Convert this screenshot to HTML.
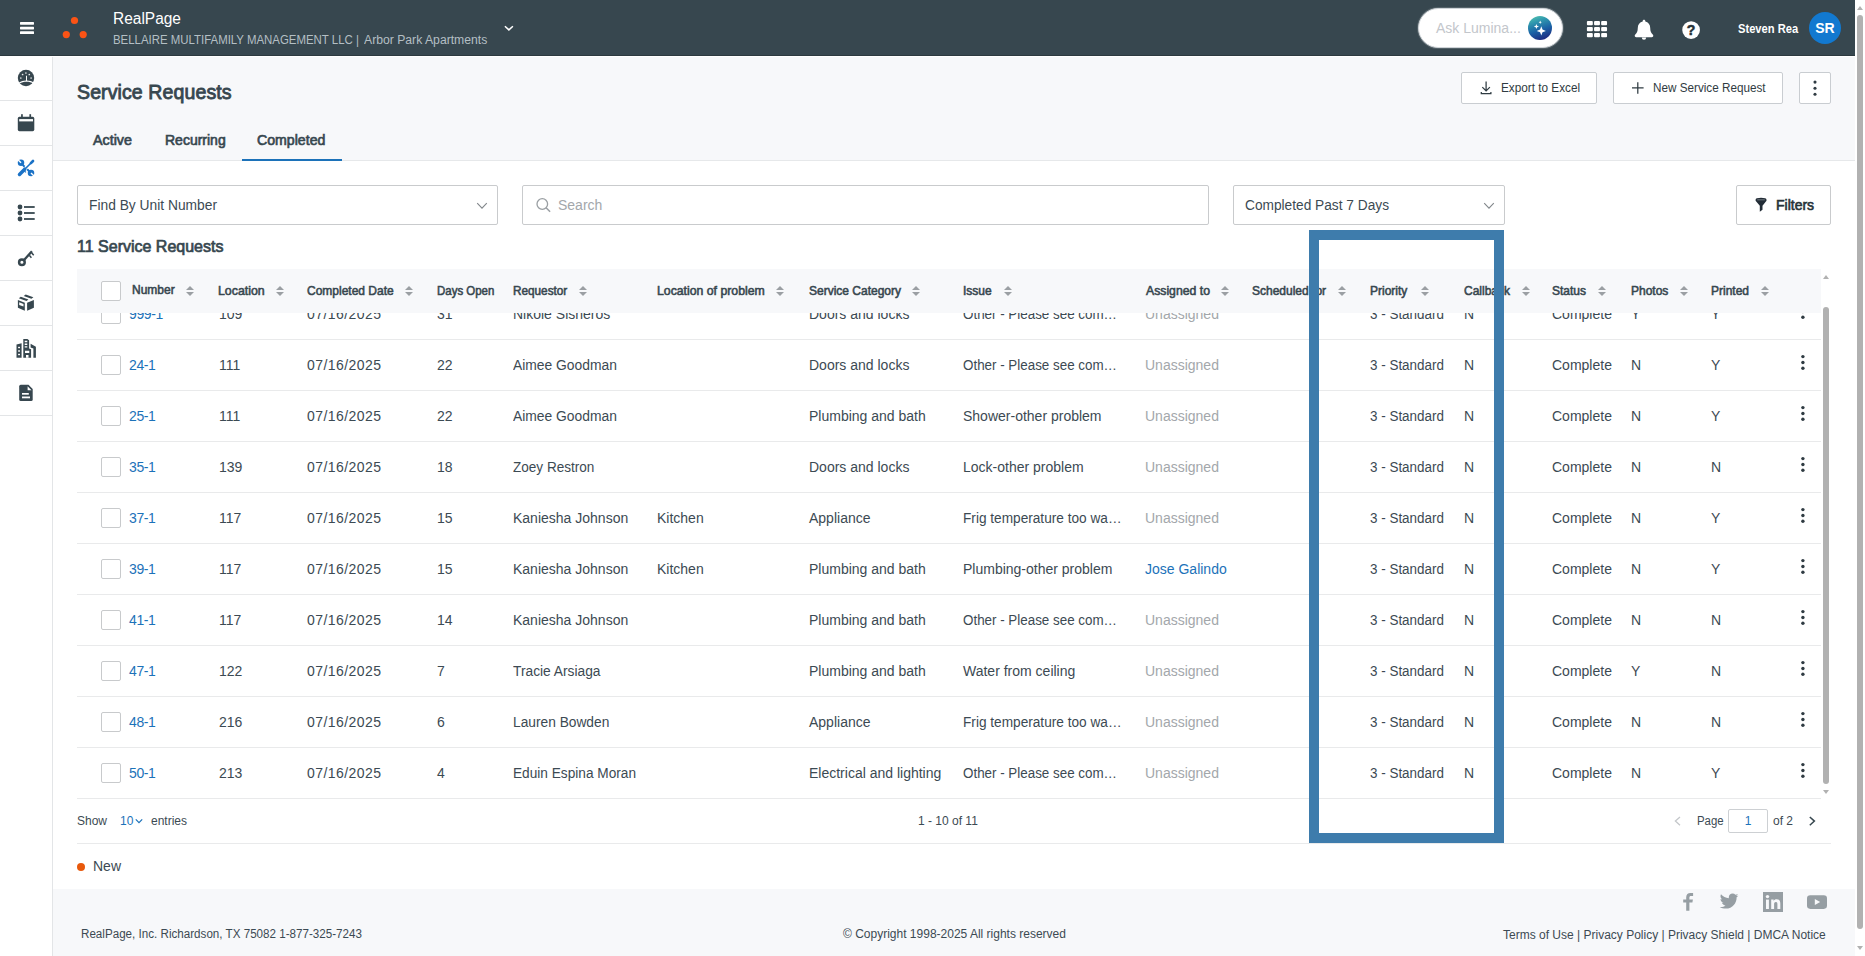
<!DOCTYPE html>
<html lang="en">
<head>
<meta charset="utf-8">
<title>Service Requests</title>
<style>
*{box-sizing:border-box;margin:0;padding:0}
html,body{width:1865px;height:956px;overflow:hidden;background:#fff}
body{font-family:"Liberation Sans",sans-serif;font-size:14px;color:#3c4a53;position:relative}
.abs{position:absolute}
.sx{transform-origin:0 50%;display:inline-block}
/* ---------- top bar ---------- */
#topbar{position:absolute;left:0;top:0;width:1855px;height:56px;background:#37474f;color:#fff;border-bottom:1px solid #2c393f}
#topbar .burger{position:absolute;left:20px;top:22px;width:14px;height:12px}
#topbar .burger i{position:absolute;left:0;width:14px;height:2px;background:#fff}
#topbar .brand{position:absolute;transform:scaleX(.967);transform-origin:0 50%;left:113px;top:9px;font-size:16px;line-height:20px;color:#fff;white-space:nowrap}
#topbar .sub{position:absolute;transform:scaleX(.969);transform-origin:0 50%;left:113px;top:32px;font-size:12px;line-height:16px;color:#b4bfc4;white-space:nowrap}
#topbar .uname{position:absolute;transform:scaleX(.93);transform-origin:0 50%;left:1738px;top:21px;font-size:12px;line-height:16px;font-weight:bold;white-space:nowrap}
#topbar .avatar{position:absolute;left:1809px;top:12px;width:32px;height:32px;border-radius:50%;background:#1279d0;color:#fff;font-size:14px;font-weight:bold;line-height:32px;text-align:center}
#ask{position:absolute;left:1418px;top:8px;width:145px;height:40px;border-radius:20px;background:#fff;border:1px solid #cfd4d8;box-shadow:0 0 0 1px rgba(255,255,255,.15)}
#ask span{position:absolute;left:17px;top:11px;font-size:14px;line-height:16px;color:#c3c6cb;white-space:nowrap}
/* ---------- side nav ---------- */
#side{position:absolute;left:0;top:56px;width:53px;height:900px;background:#fff;border-right:1px solid #e3e5e7}
#side .it{position:absolute;left:0;width:52px;height:45px;border-bottom:1px solid #e3e5e7}
#side .it svg{position:absolute;left:14px;top:10px;width:24px;height:24px}
/* ---------- page ---------- */
#page{position:absolute;left:53px;top:56px;width:1802px;height:900px;background:#f7f8fa}
#panel{position:absolute;left:53px;top:160px;width:1802px;height:729px;background:#fff;border-top:1px solid #e6e8ea}
h1{position:absolute;left:77px;top:80px;transform:scaleX(.977);transform-origin:0 50%;font-size:20px;line-height:24px;font-weight:normal;-webkit-text-stroke:.85px currentColor;letter-spacing:.1px;color:#37474f;white-space:nowrap}
.tab{position:absolute;transform-origin:0 50%;top:131px;font-size:14px;line-height:18px;font-weight:normal;-webkit-text-stroke:.65px currentColor;color:#37474f;white-space:nowrap}
.btn{position:absolute;height:32px;top:72px;border:1px solid #c9cdd1;border-radius:2px;background:#fff;font-size:12px;line-height:30px;color:#2f3b42;white-space:nowrap}
.field{position:absolute;top:185px;height:40px;border:1px solid #c9cbcd;border-radius:2px;background:#fff;font-size:14px;line-height:38px;color:#3c4a53;white-space:nowrap}
/* ---------- grid ---------- */
#ghead{position:absolute;left:77px;top:269px;width:1744px;height:44px;background:#f7f8fa;z-index:3}
#ghead span{position:absolute;top:14px;transform-origin:0 50%;font-size:12px;line-height:16px;font-weight:normal;-webkit-text-stroke:.55px currentColor;color:#37474f;white-space:nowrap}
#ghead em{position:absolute;top:17px;width:8px;height:10px}
#ghead em:before,#ghead em:after{content:"";position:absolute;left:0;border-left:4px solid transparent;border-right:4px solid transparent}
#ghead em:before{top:0;border-bottom:4px solid #9b9fa3}
#ghead em:after{top:6px;border-top:4px solid #9b9fa3}
.cb{position:absolute;left:24px;width:20px;height:20px;border:1px solid #c8cacc;border-radius:2px;background:#fff}
#rows{position:absolute;left:77px;top:289px;width:1744px;height:510px;overflow:hidden;z-index:1}
.r{position:relative;height:51px;border-bottom:1px solid #e9eaeb}
.r span,.r a{position:absolute;top:17px;font-size:14px;line-height:16px;white-space:nowrap;color:#3c4a53;text-decoration:none}
.r a,.r .lk{color:#1c72b9}
.r .mut{color:#a3a7ab}
.r .cb{top:15px}
.r .kb{position:absolute;left:1722px;top:13.5px;fill:#2f3b42}
.c1{left:52px;letter-spacing:-.4px}.c2{left:142px}.c3{left:230px;letter-spacing:.45px}.c4{left:360px}.c5{left:436px}.c6{left:580px}.c7{left:732px}.c8{left:886px;transform-origin:0 50%}.c9{left:1068px}.c11{left:1293px;transform:scaleX(.96);transform-origin:0 50%}.c12{left:1387px}.c13{left:1475px}.c14{left:1554px}.c15{left:1634px}
.gf{position:absolute;top:813px;font-size:12px;line-height:16px;color:#3c4a53;white-space:nowrap}
.tri-up{width:0;height:0;border-left:3px solid transparent;border-right:3px solid transparent;border-bottom:4px solid #b1b1b1}
.tri-dn{width:0;height:0;border-left:3px solid transparent;border-right:3px solid transparent;border-top:4px solid #b1b1b1}
#hl{position:absolute;left:1309px;top:230px;width:195px;height:613px;border:10px solid #3e7cac;z-index:9}
#foot{position:absolute;left:53px;top:889px;width:1802px;height:67px;background:#f7f8fa;font-size:12px;color:#3c4a53}
#sb{position:absolute;left:1855px;top:0;width:10px;height:956px;background:#fff}
</style>
</head>
<body>
<div id="page"></div>
<div id="panel"></div>

<!-- TOP BAR -->
<div id="topbar">
  <svg class="abs" style="left:18px;top:20px" width="18" height="16" viewBox="18 20 18 16"><g fill="#fff"><rect x="20" y="22" width="14" height="2.700" rx=".6"/><rect x="20" y="26.700" width="14" height="2.700" rx=".6"/><rect x="20" y="31.300" width="14" height="2.700" rx=".6"/></g></svg>
  <svg class="abs" style="left:60px;top:14px" width="30" height="28" viewBox="0 0 30 28"><circle cx="14.5" cy="6.5" r="3.6" fill="#fb5315"/><circle cx="6.3" cy="20.6" r="3.6" fill="#fb5315"/><circle cx="23.2" cy="20.6" r="3.6" fill="#fb5315"/></svg>
  <div class="brand">RealPage</div>
  <div class="sub" style="transform:scaleX(.952)">BELLAIRE MULTIFAMILY MANAGEMENT LLC |</div>
  <div class="sub" style="left:364px;transform:scaleX(1.016)">Arbor Park Apartments</div>
  <div id="ask"><span>Ask Lumina...</span></div>
  <svg class="abs" style="left:1500px;top:0" width="340" height="56" viewBox="1500 0 340 56">
    <defs><linearGradient id="lg" x1="0.25" y1="0" x2="0.6" y2="1"><stop offset="0" stop-color="#4fbfb0"/><stop offset="0.25" stop-color="#2f97ae"/><stop offset="0.6" stop-color="#1b62a6"/><stop offset="1" stop-color="#1d2a80"/></linearGradient></defs>
    <circle cx="1540" cy="28" r="12" fill="url(#lg)"/>
    <path d="M1541.3 26.2 l1.2 3.4 3.4 1.3 -3.4 1.3 -1.2 3.4 -1.2 -3.4 -3.4 -1.3 3.4 -1.3z" fill="#fff"/>
    <path d="M1536.4 23.9 l.7 1.9 1.9 .7 -1.9 .7 -.7 1.9 -.7 -1.9 -1.9 -.7 1.9 -.7z" fill="#fff"/>
    <path d="M1540.2 20.6 l.45 1.2 1.2 .45 -1.2 .45 -.45 1.2 -.45 -1.2 -1.2 -.45 1.2 -.45z" fill="#fff"/>
    <g fill="#fff">
      <rect x="1586.9" y="21" width="5.900" height="4.250" rx="1"/><rect x="1594.05" y="21" width="5.900" height="4.250" rx="1"/><rect x="1601.15" y="21" width="5.900" height="4.250" rx="1"/><rect x="1586.9" y="27.05" width="5.900" height="4.250" rx="1"/><rect x="1594.05" y="27.05" width="5.900" height="4.250" rx="1"/><rect x="1601.15" y="27.05" width="5.900" height="4.250" rx="1"/><rect x="1586.9" y="33" width="5.900" height="4.250" rx="1"/><rect x="1594.05" y="33" width="5.900" height="4.250" rx="1"/><rect x="1601.15" y="33" width="5.900" height="4.250" rx="1"/>
      <path d="M1644 19.7c.8 0 1.3.6 1.3 1.3v.6c2.9.6 4.9 3.100 4.900 6.100 0 3.700 1.100 5.300 2.300 6.500.5.500.8 1 .8 1.600 0 .8-.6 1.400-1.500 1.400h-15.600c-.9 0-1.500-.6-1.500-1.400 0-.6.300-1.100.8-1.600 1.200-1.200 2.300-2.800 2.300-6.500 0-3 2-5.500 4.900-6.100v-.6c0-.7.500-1.300 1.300-1.300z"/>
      <path d="M1641.800 37.500h4.400a2.200 2.300 0 0 1-4.400 0z"/>
      <circle cx="1691.100" cy="30.050" r="8.850"/>
    </g>
  </svg>
  <div class="abs" style="left:1686px;top:22px;width:10px;font-size:14px;line-height:16px;font-weight:bold;color:#263238;-webkit-text-stroke:.5px #263238;text-align:center">?</div>
  <svg class="abs" style="left:500px;top:20px" width="16" height="16" viewBox="0 0 16 16"><path d="M4.900 6.200l4 3.700 4-3.700" fill="none" stroke="#fff" stroke-width="1.500"/></svg>
  <div class="uname">Steven Rea</div>
  <div class="avatar">SR</div>
</div>

<!-- SIDE NAV -->
<div id="side">
  <svg class="abs" style="left:0;top:0" width="52" height="360" viewBox="0 56 52 360">
    <!-- gauge -->
    <g>
      <circle cx="26" cy="78" r="8.200" fill="#37474f"/>
      <g fill="#fff">
        <circle cx="25.900" cy="73" r=".85" opacity=".8"/><circle cx="22.600" cy="74.500" r=".85" opacity=".9"/><circle cx="29.300" cy="74.500" r=".85" opacity=".9"/><circle cx="20.800" cy="78" r=".85" opacity=".8"/><circle cx="31.100" cy="78" r=".85" opacity=".8"/>
        <path d="M26 75.800h1v4.700c2.600.1 5 .8 7 2l-.6 1.100c-2-1.200-4.400-1.800-6.900-1.800s-4.900.6-6.900 1.800l-.6-1.100c2-1.200 4.400-1.900 7-2z"/>
      </g>
    </g>
    <!-- calendar -->
    <g fill="#37474f">
      <rect x="17.800" y="116.800" width="16.500" height="14.400" rx="1.600"/>
      <rect x="21.100" y="114.200" width="1.700" height="4"/><rect x="29.400" y="114.200" width="1.700" height="4"/>
      <rect x="19.200" y="119.100" width="13.800" height="2.300" fill="#fff"/>
    </g>
    <!-- tools -->
    <g fill="none" stroke="#1b72c6">
      <path d="M19.500 174.400l5.200-5.200" stroke-width="3.500" stroke-linecap="round"/>
      <path d="M24.500 169.500l7.300-7.300" stroke-width="1.600"/>
      <path d="M30.900 163.100l2.100-2.100" stroke-width="2.700" stroke-linecap="round"/>
      <path d="M22.700 164.900l1.900 1.900M27.200 169.200l2.400 2.400" stroke-width="2"/>
      <path d="M24.600 171.100l1.300 1.300" stroke-width="1.100"/>
    </g>
    <g fill="#1b72c6">
      <circle cx="21" cy="162.800" r="3.250"/><circle cx="31" cy="172.900" r="3.250"/>
    </g>
    <path d="M17.700 159.500l3.300 3.300" stroke="#fff" stroke-width="1.400" fill="none"/>
    <path d="M34.300 176.200l-3.300-3.300" stroke="#fff" stroke-width="1.400" fill="none"/>
    <!-- list -->
    <g fill="#37474f">
      <circle cx="20" cy="207" r="2.400"/><circle cx="20" cy="213" r="2.400"/><circle cx="20" cy="219" r="2.400"/>
      <rect x="24" y="206.100" width="10.700" height="1.800"/><rect x="24" y="212.100" width="10.700" height="1.800"/><rect x="24" y="218.100" width="10.700" height="1.800"/>
    </g>
    <!-- key -->
    <g fill="none" stroke="#37474f">
      <circle cx="21.900" cy="262.300" r="2.800" stroke-width="2.500"/>
      <path d="M24.300 259.700l7.600-8.400" stroke-width="2.300"/>
      <path d="M29.300 255.300l2.100 2.500M31.600 252.700l2.100 2.500" stroke-width="1.500"/>
    </g>
    <!-- box -->
    <g fill="#37474f">
      <path d="M17.900 300l6.900 2.700v8.100l-6.900-3.100z"/>
      <path d="M27.100 302.700l6.800-2.700v7.700l-6.800 3.100z"/>
      <path d="M18.800 298.300l2-1.600 7.600 2.700-1.900 1.600zM23.700 296.100l2-1.500 7.700 2.600-2 1.600z"/>
      <path d="M19.200 302.300l4.300 1.700v2.600l-4.300-1.700z" fill="#fff"/>
    </g>
    <!-- buildings -->
    <g fill="#37474f">
      <path d="M16.500 344.400l5.100-1.100v14.500h-5.100z"/>
      <rect x="18.100" y="346.800" width="1.900" height="1.400" fill="#fff"/><rect x="18.100" y="350.300" width="1.900" height="1.400" fill="#fff"/><rect x="18.100" y="353.800" width="1.900" height="1.400" fill="#fff"/>
      <path d="M23.300 339h4.100l1.700 1.300v8.100l2 .8v8.600h-7.800z"/>
      <path d="M24.700 340.700h2.600v1.500h-2.600zM24.700 343.500h2.600v1.400h-2.600zM24.700 346.200h2.600v1.400h-2.600zM25 350.700h4.300v2.300h-4.300zM26 355h2.500v2.800h-2.500z" fill="#fff"/>
      <path d="M30.600 343.800l5.300 3v11h-2.500v-9.400l-2.800-1z"/>
    </g>
    <!-- file -->
    <g fill="#37474f">
      <path d="M20.700 384.700h7.800l4.200 4.300v10.500a1.500 1.500 0 0 1-1.500 1.500h-10.500a1.500 1.500 0 0 1-1.500-1.500v-13.300a1.500 1.500 0 0 1 1.500-1.500z"/>
      <path d="M27.600 386.300l3.900 4h-3.900z" fill="#fff"/>
      <rect x="22" y="393" width="6.800" height="1.700" fill="#fff"/><rect x="22" y="396.500" width="8" height="1.800" fill="#fff"/>
    </g>
  </svg>
  <div class="it" style="top:0"></div>
  <div class="it" style="top:45px"></div>
  <div class="it" style="top:90px"></div>
  <div class="it" style="top:135px"></div>
  <div class="it" style="top:180px"></div>
  <div class="it" style="top:225px"></div>
  <div class="it" style="top:270px"></div>
  <div class="it" style="top:315px"></div>
</div>

<div class="abs" style="left:0;top:56px;width:1855px;height:1px;background:#fff"></div>

<!-- PAGE HEADER -->
<h1>Service Requests</h1>
<div class="tab" style="left:93px;transform:scaleX(1.02)">Active</div>
<div class="tab" style="left:165px">Recurring</div>
<div class="tab" style="left:257px;transform:scaleX(1.01)">Completed</div>
<div class="abs" style="left:242px;top:159px;width:100px;height:2px;background:#1c72b9;z-index:2"></div>

<div class="btn" style="left:1461px;width:136px"><svg class="abs" style="left:17px;top:7px" width="16" height="16" viewBox="1479 80 16 16"><path d="M1486.100 81.400v9M1482.300 87.100l3.800 3.800 3.800-3.800M1481.300 92v1.600h9.600v-1.600" fill="none" stroke="#2f3b42" stroke-width="1.250"/></svg><span class="abs sx" style="left:39px;transform:scaleX(.98)">Export to Excel</span></div>
<div class="btn" style="left:1613px;width:170px"><svg class="abs" style="left:17px;top:7px" width="16" height="16" viewBox="1631 80 16 16"><path d="M1637.800 82.200v11.500M1632 87.900h11.600" fill="none" stroke="#2f3b42" stroke-width="1.250"/></svg><span class="abs sx" style="left:39px;transform:scaleX(.976)">New Service Request</span></div>
<div class="btn" style="left:1799px;width:32px"><svg class="abs" style="left:7px;top:7px" width="16" height="16" viewBox="1807 80 16 16"><g fill="#2f3b42"><circle cx="1815" cy="82.100" r="1.550"/><circle cx="1815" cy="88.200" r="1.550"/><circle cx="1815" cy="94.200" r="1.550"/></g></svg></div>

<!-- FILTER ROW -->
<div class="field" style="left:77px;width:421px"><svg class="abs" style="left:397px;top:14px" width="14" height="12" viewBox="0 0 14 12"><path d="M2.200 3.200l4.800 5 4.800-5" fill="none" stroke="#82878b" stroke-width="1.100"/></svg><span class="abs sx" style="left:11px;transform:scaleX(.985)">Find By Unit Number</span></div>
<div class="field" style="left:522px;width:687px"><svg class="abs" style="left:11px;top:9px" width="18" height="18" viewBox="534 195 18 18"><circle cx="542.300" cy="204" r="5.300" fill="none" stroke="#9a9fa3" stroke-width="1.300"/><path d="M546.100 207.800l4 4" stroke="#9a9fa3" stroke-width="1.500" fill="none"/></svg><span class="abs" style="left:35px;color:#a3a7ab">Search</span></div>
<div class="field" style="left:1233px;width:272px"><svg class="abs" style="left:248px;top:14px" width="14" height="12" viewBox="0 0 14 12"><path d="M2.200 3.200l4.800 5 4.800-5" fill="none" stroke="#82878b" stroke-width="1.100"/></svg><span class="abs sx" style="left:11px;transform:scaleX(.979)">Completed Past 7 Days</span></div>
<div class="field" style="left:1736px;width:95px;font-weight:normal;-webkit-text-stroke:.6px currentColor;color:#263238"><svg class="abs" style="left:17px;top:11px" width="14" height="16" viewBox="1754 197 14 16"><path d="M1755.600 199.700q0-1.900 5.450-1.900t5.450 1.900v1.100l-4 4.900v4l-2.700 2.100v-6.100l-4.200-4.900z" fill="#222c36"/><rect x="1757.200" y="199.400" width="7.700" height=".9" rx=".4" fill="#8d959c"/></svg><span class="abs" style="left:39px">Filters</span></div>

<div class="abs" style="left:77px;top:237px;font-size:16px;line-height:20px;font-weight:normal;-webkit-text-stroke:.7px currentColor;color:#37474f;white-space:nowrap">11 Service Requests</div>

<!-- GRID -->
<div id="ghead">
  <div class="cb" style="top:12px"></div>
  <span style="left:55px;top:13px">Number</span><em style="left:109px"></em>
  <span style="left:141px;transform:scaleX(1.03)">Location</span><em style="left:199px"></em>
  <span style="left:230px">Completed Date</span><em style="left:328px"></em>
  <span style="left:360px;transform:scaleX(.955)">Days Open</span>
  <span style="left:436px;transform:scaleX(.98)">Requestor</span><em style="left:502px"></em>
  <span style="left:580px;transform:scaleX(1.022)">Location of problem</span><em style="left:699px"></em>
  <span style="left:732px">Service Category</span><em style="left:835px"></em>
  <span style="left:886px">Issue</span><em style="left:927px"></em>
  <span style="left:1068.500px;transform:scaleX(1.02)">Assigned to</span><em style="left:1144px"></em>
  <span style="left:1175px">Scheduled for</span><em style="left:1261px"></em>
  <span style="left:1293px">Priority</span><em style="left:1344px"></em>
  <span style="left:1387px">Callback</span><em style="left:1445px"></em>
  <span style="left:1475px">Status</span><em style="left:1521px"></em>
  <span style="left:1554px">Photos</span><em style="left:1603px"></em>
  <span style="left:1634px">Printed</span><em style="left:1684px"></em>
</div>
<div id="rows">
  <div class="r"><div class="cb"></div><a class="c1">999-1</a><span class="c2">109</span><span class="c3">07/16/2025</span><span class="c4">31</span><span class="c5">Nikole Sisneros</span><span class="c7">Doors and locks</span><span class="c8" style="transform:scaleX(.956)">Other - Please see com…</span><span class="c9 mut">Unassigned</span><span class="c11">3 - Standard</span><span class="c12">N</span><span class="c13">Complete</span><span class="c14">Y</span><span class="c15">Y</span><svg class="kb" width="8" height="20" viewBox="0 0 8 20"><circle cx="3.900" cy="2.600" r="1.700"/><circle cx="3.900" cy="8.500" r="1.700"/><circle cx="3.900" cy="14.300" r="1.700"/></svg></div>
  <div class="r"><div class="cb"></div><a class="c1">24-1</a><span class="c2">111</span><span class="c3">07/16/2025</span><span class="c4">22</span><span class="c5" style="transform:scaleX(0.989);transform-origin:0 50%">Aimee Goodman</span><span class="c7">Doors and locks</span><span class="c8" style="transform:scaleX(.956)">Other - Please see com…</span><span class="c9 mut">Unassigned</span><span class="c11">3 - Standard</span><span class="c12">N</span><span class="c13">Complete</span><span class="c14">N</span><span class="c15">Y</span><svg class="kb" width="8" height="20" viewBox="0 0 8 20"><circle cx="3.900" cy="2.600" r="1.700"/><circle cx="3.900" cy="8.500" r="1.700"/><circle cx="3.900" cy="14.300" r="1.700"/></svg></div>
  <div class="r"><div class="cb"></div><a class="c1">25-1</a><span class="c2">111</span><span class="c3">07/16/2025</span><span class="c4">22</span><span class="c5" style="transform:scaleX(0.989);transform-origin:0 50%">Aimee Goodman</span><span class="c7">Plumbing and bath</span><span class="c8">Shower-other problem</span><span class="c9 mut">Unassigned</span><span class="c11">3 - Standard</span><span class="c12">N</span><span class="c13">Complete</span><span class="c14">N</span><span class="c15">Y</span><svg class="kb" width="8" height="20" viewBox="0 0 8 20"><circle cx="3.900" cy="2.600" r="1.700"/><circle cx="3.900" cy="8.500" r="1.700"/><circle cx="3.900" cy="14.300" r="1.700"/></svg></div>
  <div class="r"><div class="cb"></div><a class="c1">35-1</a><span class="c2">139</span><span class="c3">07/16/2025</span><span class="c4">18</span><span class="c5" style="transform:scaleX(0.968);transform-origin:0 50%">Zoey Restron</span><span class="c7">Doors and locks</span><span class="c8">Lock-other problem</span><span class="c9 mut">Unassigned</span><span class="c11">3 - Standard</span><span class="c12">N</span><span class="c13">Complete</span><span class="c14">N</span><span class="c15">N</span><svg class="kb" width="8" height="20" viewBox="0 0 8 20"><circle cx="3.900" cy="2.600" r="1.700"/><circle cx="3.900" cy="8.500" r="1.700"/><circle cx="3.900" cy="14.300" r="1.700"/></svg></div>
  <div class="r"><div class="cb"></div><a class="c1">37-1</a><span class="c2">117</span><span class="c3">07/16/2025</span><span class="c4">15</span><span class="c5">Kaniesha Johnson</span><span class="c6">Kitchen</span><span class="c7">Appliance</span><span class="c8" style="transform:scaleX(.975)">Frig temperature too wa…</span><span class="c9 mut">Unassigned</span><span class="c11">3 - Standard</span><span class="c12">N</span><span class="c13">Complete</span><span class="c14">N</span><span class="c15">Y</span><svg class="kb" width="8" height="20" viewBox="0 0 8 20"><circle cx="3.900" cy="2.600" r="1.700"/><circle cx="3.900" cy="8.500" r="1.700"/><circle cx="3.900" cy="14.300" r="1.700"/></svg></div>
  <div class="r"><div class="cb"></div><a class="c1">39-1</a><span class="c2">117</span><span class="c3">07/16/2025</span><span class="c4">15</span><span class="c5">Kaniesha Johnson</span><span class="c6">Kitchen</span><span class="c7">Plumbing and bath</span><span class="c8">Plumbing-other problem</span><span class="c9 lk">Jose Galindo</span><span class="c11">3 - Standard</span><span class="c12">N</span><span class="c13">Complete</span><span class="c14">N</span><span class="c15">Y</span><svg class="kb" width="8" height="20" viewBox="0 0 8 20"><circle cx="3.900" cy="2.600" r="1.700"/><circle cx="3.900" cy="8.500" r="1.700"/><circle cx="3.900" cy="14.300" r="1.700"/></svg></div>
  <div class="r"><div class="cb"></div><a class="c1">41-1</a><span class="c2">117</span><span class="c3">07/16/2025</span><span class="c4">14</span><span class="c5">Kaniesha Johnson</span><span class="c7">Plumbing and bath</span><span class="c8" style="transform:scaleX(.956)">Other - Please see com…</span><span class="c9 mut">Unassigned</span><span class="c11">3 - Standard</span><span class="c12">N</span><span class="c13">Complete</span><span class="c14">N</span><span class="c15">N</span><svg class="kb" width="8" height="20" viewBox="0 0 8 20"><circle cx="3.900" cy="2.600" r="1.700"/><circle cx="3.900" cy="8.500" r="1.700"/><circle cx="3.900" cy="14.300" r="1.700"/></svg></div>
  <div class="r"><div class="cb"></div><a class="c1">47-1</a><span class="c2">122</span><span class="c3">07/16/2025</span><span class="c4">7</span><span class="c5" style="transform:scaleX(0.983);transform-origin:0 50%">Tracie Arsiaga</span><span class="c7">Plumbing and bath</span><span class="c8">Water from ceiling</span><span class="c9 mut">Unassigned</span><span class="c11">3 - Standard</span><span class="c12">N</span><span class="c13">Complete</span><span class="c14">Y</span><span class="c15">N</span><svg class="kb" width="8" height="20" viewBox="0 0 8 20"><circle cx="3.900" cy="2.600" r="1.700"/><circle cx="3.900" cy="8.500" r="1.700"/><circle cx="3.900" cy="14.300" r="1.700"/></svg></div>
  <div class="r"><div class="cb"></div><a class="c1">48-1</a><span class="c2">216</span><span class="c3">07/16/2025</span><span class="c4">6</span><span class="c5" style="transform:scaleX(0.982);transform-origin:0 50%">Lauren Bowden</span><span class="c7">Appliance</span><span class="c8" style="transform:scaleX(.975)">Frig temperature too wa…</span><span class="c9 mut">Unassigned</span><span class="c11">3 - Standard</span><span class="c12">N</span><span class="c13">Complete</span><span class="c14">N</span><span class="c15">N</span><svg class="kb" width="8" height="20" viewBox="0 0 8 20"><circle cx="3.900" cy="2.600" r="1.700"/><circle cx="3.900" cy="8.500" r="1.700"/><circle cx="3.900" cy="14.300" r="1.700"/></svg></div>
  <div class="r"><div class="cb"></div><a class="c1">50-1</a><span class="c2">213</span><span class="c3">07/16/2025</span><span class="c4">4</span><span class="c5" style="transform:scaleX(.976);transform-origin:0 50%">Eduin Espina Moran</span><span class="c7">Electrical and lighting</span><span class="c8" style="transform:scaleX(.956)">Other - Please see com…</span><span class="c9 mut">Unassigned</span><span class="c11">3 - Standard</span><span class="c12">N</span><span class="c13">Complete</span><span class="c14">N</span><span class="c15">Y</span><svg class="kb" width="8" height="20" viewBox="0 0 8 20"><circle cx="3.900" cy="2.600" r="1.700"/><circle cx="3.900" cy="8.500" r="1.700"/><circle cx="3.900" cy="14.300" r="1.700"/></svg></div>
</div>


<!-- GRID FOOTER -->
<div class="abs" style="left:77px;top:843px;width:1754px;height:1px;background:#e9eaeb"></div>
<div class="gf" style="left:77px">Show</div>
<div class="gf" style="left:120px;color:#1c72b9">10</div>
<svg class="abs" style="left:134px;top:816px" width="10" height="10" viewBox="134 816 10 10"><path d="M135.800 819.300l3.200 3.300 3.200-3.300" fill="none" stroke="#1c72b9" stroke-width="1.200"/></svg>
<div class="gf" style="left:151px">entries</div>
<div class="gf" style="left:918px">1 - 10 of 11</div>
<svg class="abs" style="left:1670px;top:812px" width="16" height="18" viewBox="1670 812 16 18"><path d="M1680 817l-4.600 4.100 4.600 4.100" fill="none" stroke="#c4c7ca" stroke-width="1.300"/></svg>
<div class="gf sx" style="left:1697px;transform:scaleX(.95)">Page</div>
<div class="abs" style="left:1728px;top:809px;width:40px;height:24px;border:1px solid #cdd0d3;border-radius:2px;background:#fff;font-size:12px;line-height:22px;text-align:center;color:#1c72b9">1</div>
<div class="gf" style="left:1773px">of 2</div>
<svg class="abs" style="left:1804px;top:812px" width="16" height="18" viewBox="1804 812 16 18"><path d="M1809.800 817l4.600 4.100-4.600 4.100" fill="none" stroke="#37474f" stroke-width="1.500"/></svg>

<div class="abs" style="left:77px;top:863px;width:8px;height:8px;border-radius:50%;background:#e8590c"></div>
<div class="abs" style="left:93px;top:858px;font-size:14px;line-height:16px;color:#3c4a53">New</div>

<!-- inner grid scrollbar -->
<div class="abs" style="left:1823px;top:307px;width:6px;height:477px;border-radius:3px;background:#b1b1b1"></div>
<div class="abs tri-up" style="left:1823px;top:275px"></div>
<div class="abs tri-dn" style="left:1823px;top:790px"></div>

<div id="hl"></div>
<div id="foot">
  <svg class="abs" style="left:1625px;top:0" width="160" height="30" viewBox="1678 889 160 30">
    <g fill="#969ea3">
      <path d="M1686.200 910.700v-8.100h-3v-3.100h3v-2.300c0-2.800 1.700-4.300 4.200-4.300 1.200 0 2.300.1 2.700.2v2.800h-1.900c-1.500 0-1.800.7-1.800 1.700v1.900h3.500l-.5 3.100h-3v8.100z"/>
      <path d="M1738.300 895.400c-.7.300-1.400.5-2.200.6.800-.5 1.400-1.200 1.700-2.100-.7.400-1.600.8-2.400.9-.7-.8-1.700-1.200-2.800-1.200-2.100 0-3.800 1.700-3.800 3.800 0 .3 0 .6.100.9-3.200-.2-6-1.700-7.900-4-.3.600-.5 1.200-.5 1.900 0 1.300.7 2.500 1.700 3.200-.6 0-1.200-.2-1.700-.5 0 1.900 1.300 3.400 3.100 3.800-.3.100-.7.100-1 .1-.2 0-.5 0-.7-.1.500 1.500 1.900 2.600 3.600 2.700-1.300 1-3 1.600-4.800 1.600-.3 0-.6 0-.9-.1 1.700 1.100 3.700 1.700 5.900 1.700 7.100 0 10.900-5.800 10.900-10.900v-.5c.7-.5 1.400-1.200 1.700-1.800z"/>
      <rect x="1763" y="892" width="20" height="20"/>
      <rect x="1807" y="895.200" width="20" height="13.700" rx="3.300"/>
    </g>
    <g fill="#f7f8fa">
      <rect x="1766" y="899.600" width="2.900" height="9.400"/><circle cx="1767.500" cy="896.600" r="1.700"/>
      <path d="M1770.800 899.600h2.800v1.300c.5-.9 1.600-1.600 3.100-1.600 3 0 3.600 2 3.600 4.500v5.200h-2.900v-4.600c0-1.100 0-2.500-1.500-2.500s-1.800 1.200-1.800 2.400v4.700h-2.900v-9.400z"/>
      <path d="M1814.800 899.100l5.400 3-5.400 3z"/>
    </g>
  </svg>
  <div class="abs sx" style="left:28px;top:37px;line-height:16px;white-space:nowrap;transform:scaleX(.969)">RealPage, Inc. Richardson, TX 75082 1-877-325-7243</div>
  <div class="abs" style="left:790px;top:37px;line-height:16px;white-space:nowrap">© Copyright 1998-2025 All rights reserved</div>
  <div class="abs" style="left:1450px;top:38px;line-height:16px;white-space:nowrap">Terms of Use | Privacy Policy | Privacy Shield | DMCA Notice</div>
</div>
<div id="sb">
  <div class="abs tri-up" style="left:2px;top:6px"></div>
  <div class="abs" style="left:2px;top:15px;width:6px;height:914px;border-radius:3px;background:#b1b1b1"></div>
  <div class="abs tri-dn" style="left:2px;top:946px"></div>
</div>
</body>
</html>
